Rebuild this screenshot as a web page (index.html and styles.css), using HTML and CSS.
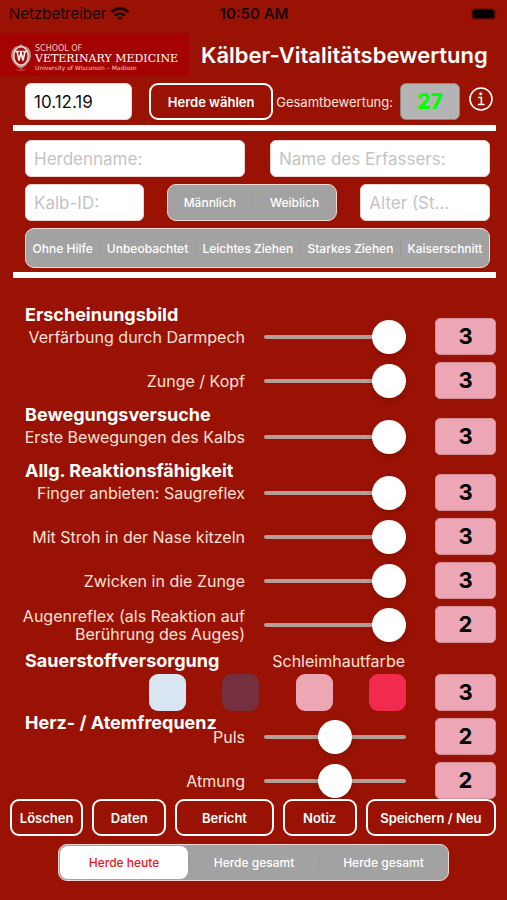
FILE: index.html
```html
<!DOCTYPE html>
<html lang="de">
<head>
  <meta charset="UTF-8">
  <meta name="viewport" content="width=device-width, initial-scale=1.0">
  <title>Kälber-Vitalitätsbewertung</title>
  <link rel="stylesheet" href="styles.css">
</head>
<body>

  <div class="status-bar">
    <div class="carrier">
      <span>Netzbetreiber</span>
      <svg width="20" height="14" viewBox="0 0 20 14" fill="none" stroke="#1a0300" stroke-width="2.6">
        <path d="M1.5 5.2C6.2 .4 13.8 .4 18.5 5.2"/>
        <path d="M4.8 8.6C7.7 5.7 12.3 5.7 15.2 8.6"/>
        <path d="M10 13.6L7.2 10.7C8.8 9.2 11.2 9.2 12.8 10.7Z" fill="#1a0300" stroke="none"/>
      </svg>
    </div>
    <span class="time">10:50 AM</span>
    <svg class="battery" width="28" height="12" viewBox="0 0 28 12">
      <rect x=".5" y=".5" width="24" height="11" rx="3" fill="none" stroke="#7a0d02"/>
      <rect x="1.5" y="1.5" width="22" height="9" rx="2" fill="#000"/>
      <path d="M26 4C27.4 4.6 27.4 7.4 26 8Z" fill="#7a0d02"/>
    </svg>
  </div>

  <header class="header">
    <div class="logo">
      <svg width="22" height="30" viewBox="0 0 22 30">
        <path d="M11 1C13 3 15 3 17 4C20 6 21 9 21 13C21 18 16 23 11 26C6 23 1 18 1 13C1 9 2 6 5 4C7 3 9 3 11 1Z" fill="#b58a80"/>
        <ellipse cx="11" cy="13" rx="8" ry="10" fill="#f3dcd6"/>
        <ellipse cx="11" cy="13" rx="6.5" ry="8.5" fill="#a80a0a"/>
        <path d="M5.5 8.5H9M9.5 8.5H12.5M13 8.5H16.5M7 8.5L9 17.5L11 9.5L13 17.5L15 8.5" fill="none" stroke="#fff" stroke-width="1.5"/>
        <path d="M5 27C9 25.5 13 25.5 17 27L11 28.5Z" fill="#bd3025"/>
      </svg>
      <div class="logo-text">
        <span class="logo-top">SCHOOL OF</span>
        <span class="logo-name">VETERINARY MEDICINE</span>
        <span class="logo-sub">University of Wisconsin – Madison</span>
      </div>
    </div>
    <h1>Kälber-Vitalitätsbewertung</h1>
  </header>

  <main>
    <div class="summary">
      <input class="field" type="text" value="10.12.19" aria-label="Datum">
      <button class="btn herd-btn">Herde wählen</button>
      <span class="total-label">Gesamtbewertung:</span>
      <output class="total">27</output>
      <button class="info-btn" aria-label="Info">
        <svg width="24" height="24" viewBox="0 0 24 24" fill="none" stroke="#fff" stroke-width="1.6">
          <circle cx="12" cy="12" r="11"/>
          <circle cx="11.7" cy="6.7" r="1.5" fill="#fff" stroke="none"/>
          <path d="M9 10.5H12.4V17.3M8.8 17.5H15.5"/>
        </svg>
      </button>
    </div>

    <div class="animal">
      <div class="form-row">
        <input class="field" type="text" placeholder="Herdenname:" aria-label="Herdenname">
        <input class="field" type="text" placeholder="Name des Erfassers:" aria-label="Name des Erfassers">
      </div>
      <div class="form-row form-row-calf">
        <input class="field" type="text" placeholder="Kalb-ID:" aria-label="Kalb-ID">
        <div class="segment">
          <label><input type="radio" name="sex"><span>Männlich</span></label>
          <label><input type="radio" name="sex"><span>Weiblich</span></label>
        </div>
        <input class="field" type="text" placeholder="Alter (St…" aria-label="Alter">
      </div>
      <div class="segment segment-birth">
        <label><input type="radio" name="birth"><span>Ohne Hilfe</span></label>
        <label><input type="radio" name="birth"><span>Unbeobachtet</span></label>
        <label><input type="radio" name="birth"><span>Leichtes Ziehen</span></label>
        <label><input type="radio" name="birth"><span>Starkes Ziehen</span></label>
        <label><input type="radio" name="birth"><span>Kaiserschnitt</span></label>
      </div>
    </div>

    <div class="scores">
      <section class="group">
        <h2>Erscheinungsbild</h2>
        <div class="row">
          <label for="meconium">Verfärbung durch Darmpech</label>
          <input type="range" id="meconium" min="0" max="3" value="3">
          <output class="score" for="meconium">3</output>
        </div>
        <div class="row">
          <label for="tongue">Zunge / Kopf</label>
          <input type="range" id="tongue" min="0" max="3" value="3">
          <output class="score" for="tongue">3</output>
        </div>
      </section>

      <section class="group">
        <h2>Bewegungsversuche</h2>
        <div class="row">
          <label for="movement">Erste Bewegungen des Kalbs</label>
          <input type="range" id="movement" min="0" max="3" value="3">
          <output class="score" for="movement">3</output>
        </div>
      </section>

      <section class="group">
        <h2>Allg. Reaktionsfähigkeit</h2>
        <div class="row">
          <label for="suck">Finger anbieten: Saugreflex</label>
          <input type="range" id="suck" min="0" max="3" value="3">
          <output class="score" for="suck">3</output>
        </div>
        <div class="row">
          <label for="straw">Mit Stroh in der Nase kitzeln</label>
          <input type="range" id="straw" min="0" max="3" value="3">
          <output class="score" for="straw">3</output>
        </div>
        <div class="row">
          <label for="pinch">Zwicken in die Zunge</label>
          <input type="range" id="pinch" min="0" max="3" value="3">
          <output class="score" for="pinch">3</output>
        </div>
        <div class="row">
          <label for="eye">Augenreflex (als Reaktion auf Berührung des Auges)</label>
          <input type="range" id="eye" min="0" max="2" value="2">
          <output class="score" for="eye">2</output>
        </div>
      </section>

      <section class="group group-oxygen">
        <div class="group-head">
          <h2>Sauerstoffversorgung</h2>
          <span>Schleimhautfarbe</span>
        </div>
        <div class="row">
          <div class="palette">
            <button class="swatch white" aria-label="Weiß"></button>
            <button class="swatch blue" aria-label="Bläulich"></button>
            <button class="swatch pink" aria-label="Rosa"></button>
            <button class="swatch red" aria-label="Rot"></button>
          </div>
          <output class="score">3</output>
        </div>
      </section>

      <section class="group group-rate">
        <h2>Herz- / Atemfrequenz</h2>
        <div class="row">
          <label for="pulse">Puls</label>
          <input type="range" id="pulse" min="1" max="3" value="2">
          <output class="score" for="pulse">2</output>
        </div>
        <div class="row">
          <label for="breath">Atmung</label>
          <input type="range" id="breath" min="1" max="3" value="2">
          <output class="score" for="breath">2</output>
        </div>
      </section>
    </div>
  </main>

  <footer class="footer">
    <div class="actions">
      <button class="btn">Löschen</button>
      <button class="btn">Daten</button>
      <button class="btn">Bericht</button>
      <button class="btn">Notiz</button>
      <button class="btn">Speichern / Neu</button>
    </div>
    <div class="segment segment-herd">
      <label><input type="radio" name="herd" checked><span>Herde heute</span></label>
      <label><input type="radio" name="herd"><span>Herde gesamt</span></label>
      <label><input type="radio" name="herd"><span>Herde gesamt</span></label>
    </div>
  </footer>

  <script>
    document.querySelectorAll(".row input[type=range]").forEach(slider => {
      slider.addEventListener("input", () => {
        slider.closest(".row").querySelector(".score").textContent = slider.value;
      });
    });
  </script>

</body>
</html>
```

FILE: styles.css
```css
* {
  box-sizing: border-box;
}

body {
  font-family: Inter, "Liberation Sans", sans-serif;
  background-color: #9a1203;
  color: #fff;
  margin: 0;
}

button, input {
  font-family: inherit;
  margin: 0;
}

h1, h2 {
  margin: 0;
}

.status-bar {
  display: grid;
  grid-template-columns: 1fr auto 1fr;
  align-items: center;
  height: 33px;
  padding: 0 8px 6px 9px;
  color: #1a0300;
  font-size: 15px;
}

.carrier {
  display: flex;
  align-items: center;
  gap: 4px;
}

.time {
  font-weight: 600;
}

.battery {
  justify-self: end;
}

/* Header */
.header {
  display: flex;
  align-items: center;
  gap: 12px;
  padding-right: 12px;
}

.logo {
  display: flex;
  align-items: center;
  gap: 3px;
  flex: 0 0 189px;
  height: 43px;
  padding: 7px 0 0 10px;
  background-color: #a50202;
}

.logo-text {
  display: flex;
  flex-direction: column;
  font-family: "DejaVu Serif", serif;
  white-space: nowrap;
}

.logo-top {
  font-family: "DejaVu Sans", sans-serif;
  font-size: 8px;
  line-height: 9px;
  color: #f5c9c0;
}

.logo-name {
  font-size: 11px;
  line-height: 11px;
}

.logo-sub {
  font-family: "DejaVu Sans", sans-serif;
  font-size: 6px;
  line-height: 8px;
  color: #f5c9c0;
}

h1 {
  font-size: 22px;
  font-weight: 600;
  white-space: nowrap;
}

/* Buttons and fields */
.btn {
  height: 37px;
  padding: 0;
  background: none;
  color: #fff;
  border: 2px solid #fff;
  border-radius: 9px;
  font-size: 13px;
  font-weight: 600;
  white-space: nowrap;
  cursor: pointer;
}

.field {
  width: 100%;
  min-width: 0;
  height: 37px;
  padding: 0 8px;
  background-color: #fff;
  border: 1px solid #e8d5d2;
  border-radius: 6px;
  color: #111;
  font-size: 17px;
}

.field::placeholder {
  color: #c4c4c6;
}

.summary {
  display: grid;
  grid-template-columns: 107fr 141fr auto auto auto;
  align-items: center;
  margin: 0 11px 0 13px;
  padding: 7px 3px 5px 12px;
  border-bottom: 6px solid #fff;
}

.herd-btn {
  margin-left: 17px;
}

.total-label {
  margin: 0 7px 0 3px;
  font-size: 13px;
  color: #ffe3dc;
}

.total {
  width: 60px;
  height: 37px;
  line-height: 35px;
  text-align: center;
  background-color: #b4b4b4;
  border: 1px solid #8c8480;
  border-radius: 6px;
  color: #0f0;
  font-size: 21px;
  font-weight: 800;
}

.info-btn {
  display: flex;
  margin: 0 0 6px 9px;
  padding: 0;
  background: none;
  border: none;
  cursor: pointer;
}

.animal {
  display: flex;
  flex-direction: column;
  gap: 7px;
  margin: 0 11px 0 13px;
  padding: 9px 6px 4px 12px;
  border-bottom: 6px solid #fff;
}

.form-row {
  display: grid;
  grid-template-columns: 1fr 1fr;
  column-gap: 25px;
}

.form-row-calf {
  grid-template-columns: 119fr 171fr 130fr;
  column-gap: 23px;
}

/* Segmented controls */
.segment {
  display: flex;
  height: 37px;
  background-color: #a2a2a2;
  border: 1px solid #f0d8d4;
  border-radius: 9px;
  font-size: 12px;
  font-weight: 500;
}

.segment label {
  position: relative;
  flex: 1;
  display: flex;
  cursor: pointer;
}

.segment label + label::before {
  content: "";
  align-self: center;
  width: 1px;
  height: 16px;
  background-color: #999;
}

.segment input {
  position: absolute;
  opacity: 0;
}

.segment span {
  flex: 1;
  display: flex;
  align-items: center;
  justify-content: center;
  white-space: nowrap;
  border-radius: 8px;
}

.segment input:checked + span {
  margin: 1px;
  background-color: #fff;
  color: #f0141e;
}

.segment-birth {
  height: 40px;
}

.segment-birth label {
  flex: 1 1 auto;
}

/* Scores */
.scores {
  padding: 26px 11px 0 25px;
}

.group {
  display: flex;
  flex-direction: column;
  gap: 7px;
  margin-bottom: 5px;
}

h2 {
  height: 22px;
  margin-bottom: -15px;
  line-height: 22px;
  font-size: 18px;
  font-weight: 700;
  white-space: nowrap;
}

.row {
  display: grid;
  grid-template-columns: 220fr 152fr 61px;
  column-gap: 19px;
  align-items: center;
  height: 37px;
}

.row label {
  margin-left: -8px;
  font-size: 16px;
  line-height: 18px;
  text-align: right;
  color: #ffe0d9;
}

.score {
  height: 37px;
  line-height: 35px;
  text-align: center;
  background-color: #eda6b5;
  border: 1px solid #d78c96;
  border-radius: 5px;
  color: #000;
  font-size: 22px;
  font-weight: 700;
}

.row input[type="range"] {
  appearance: none;
  min-width: 0;
  height: 34px;
  margin-right: 10px;
  background: none;
}

.row input[type="range"]::-webkit-slider-runnable-track {
  height: 4px;
  background-color: #b79d9a;
  border-radius: 2px;
}

.row input[type="range"]::-webkit-slider-thumb {
  appearance: none;
  width: 34px;
  height: 34px;
  margin-top: -15px;
  background-color: #fff;
  border-radius: 50%;
  box-shadow: 0 3px 6px rgba(0, 0, 0, 0.15);
}

.group-oxygen {
  gap: 2px;
  margin: 7px 0 1px;
}

.group-head {
  display: flex;
  justify-content: space-between;
  align-items: center;
  padding-right: 91px;
  font-size: 16px;
  line-height: 22px;
  color: #ffe0d9;
}

.group-head h2 {
  margin: 0;
  color: #fff;
}

.palette {
  grid-column: 1 / 3;
  display: flex;
  justify-content: space-between;
  margin: 0 10px 0 124px;
}

.swatch {
  width: 37px;
  height: 37px;
  padding: 0;
  border: none;
  border-radius: 9px;
  cursor: pointer;
}

.white { background-color: #d8e6f4; }
.blue { background-color: #75303f; }
.pink { background-color: #eda6b3; }
.red { background-color: #f02b4d; }

.group-rate {
  margin-bottom: 0;
}

.group-rate h2 {
  margin-bottom: -23px;
}

/* Footer */
.actions {
  display: grid;
  grid-template-columns: 73fr 74fr 98fr 74fr 130fr;
  gap: 9px;
  padding: 0 11px 0 10px;
}

.segment-herd {
  width: 77%;
  margin: 8px auto 19px;
}
```
